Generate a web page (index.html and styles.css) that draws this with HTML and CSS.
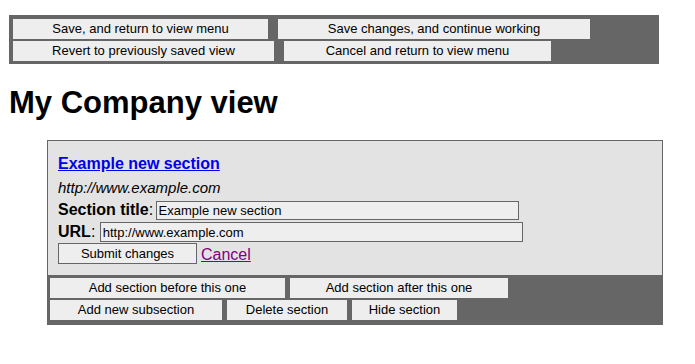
FILE: index.html
```html
<!DOCTYPE html>
<html lang="en">
<head>
  <meta charset="UTF-8">
  <title>My Company view</title>
  <link rel="stylesheet" href="styles.css">
</head>
<body>

<!-- Barra azioni della vista -->
<div class="toolbar">
  <div class="toolbar-row">
    <button class="btn w-save-return">Save, and return to view menu</button>
    <button class="btn w-save-continue">Save changes, and continue working</button>
  </div>
  <div class="toolbar-row">
    <button class="btn w-revert">Revert to previously saved view</button>
    <button class="btn w-cancel-return">Cancel and return to view menu</button>
  </div>
</div>

<h1>My Company view</h1>

<!-- Sezione in modifica -->
<div class="section">
  <div class="section-body">
    <a class="section-link" href="#">Example new section</a>
    <div class="section-url">http://www.example.com</div>
    <div class="field">
      <label><b>Section title</b>: </label>
      <input class="input-title" type="text" value="Example new section">
    </div>
    <div class="field">
      <label><b>URL</b>: </label>
      <input class="input-url" type="text" value="http://www.example.com">
    </div>
    <div class="field submit-row">
      <button class="submit">Submit changes</button>
      <a class="cancel" href="#">Cancel</a>
    </div>
  </div>

  <div class="section-bar">
    <div class="bar-row">
      <button class="btn w-add-before">Add section before this one</button>
      <button class="btn w-add-after">Add section after this one</button>
    </div>
    <div class="bar-row">
      <button class="btn w-add-sub">Add new subsection</button>
      <button class="btn w-delete">Delete section</button>
      <button class="btn w-hide">Hide section</button>
    </div>
  </div>
</div>

</body>
</html>
```

FILE: styles.css
```css
body {
  margin: 0;
  padding: 15px 9px 0;
  font-family: "Liberation Sans", Arial, sans-serif;
  font-size: 16px;
  color: #000;
  background-color: #fff;
}

/* Bottoni grigi chiari */
.btn {
  display: block;
  height: 20px;
  padding: 0;
  margin: 0;
  border: none;
  background-color: #eeeeee;
  color: #000;
  font-family: "Liberation Sans", Arial, sans-serif;
  font-size: 13px;
  line-height: 20px;
  text-align: center;
}

/* Barra in alto */
.toolbar {
  width: 650px;
  box-sizing: border-box;
  background-color: #666666;
  padding: 4px 4px 3px;
  display: flex;
  flex-direction: column;
  gap: 2px;
}

.toolbar-row {
  display: flex;
  gap: 10px;
}

.w-save-return { width: 255px; }
.w-save-continue { width: 312px; }
.w-revert { width: 261px; }
.w-cancel-return { width: 267px; }

h1 {
  font-size: 31px;
  font-weight: bold;
  margin: 21px 0 0;
  line-height: 36px;
}

/* Riquadro sezione */
.section {
  width: 616px;
  box-sizing: border-box;
  margin: 19px 0 0 38px;
  border: 1px solid #666666;
  background-color: #e3e3e3;
}

.section-body {
  padding: 13px 10px 11px;
}

.section-link {
  display: block;
  color: #0000ee;
  font-weight: bold;
  line-height: 20px;
}

.section-url {
  font-style: italic;
  font-size: 15px;
  line-height: 20px;
  margin-top: 4px;
}

.field {
  display: flex;
  align-items: center;
  height: 20px;
  margin-top: 2px;
  white-space: pre;
}

.field input {
  box-sizing: border-box;
  margin: 0;
  padding: 0 2px;
  border: 1px solid #666666;
  background-color: #eeeeee;
  font-family: "Liberation Sans", Arial, sans-serif;
  font-size: 13px;
  color: #000;
}

.input-title {
  width: 363px;
  height: 19px;
  margin-left: -2px !important;
}

.input-url {
  width: 423px;
  height: 20px;
}

.submit-row {
  height: 21px;
  margin-top: 1px;
}

.submit {
  box-sizing: border-box;
  width: 139px;
  height: 21px;
  margin: 0 4px 0 0;
  padding: 0;
  border: 1px solid #666666;
  background-color: #eeeeee;
  font-family: "Liberation Sans", Arial, sans-serif;
  font-size: 13px;
  color: #000;
}

.cancel {
  color: #800080;
  padding-top: 3px;
}

/* Barra azioni della sezione */
.section-bar {
  background-color: #666666;
  padding: 3px 2px 4px;
  display: flex;
  flex-direction: column;
  gap: 2px;
}

.bar-row {
  display: flex;
  gap: 5px;
}

.w-add-before { width: 235px; }
.w-add-after { width: 218px; }
.w-add-sub { width: 172px; }
.w-delete { width: 120px; }
.w-hide { width: 105px; }
```
